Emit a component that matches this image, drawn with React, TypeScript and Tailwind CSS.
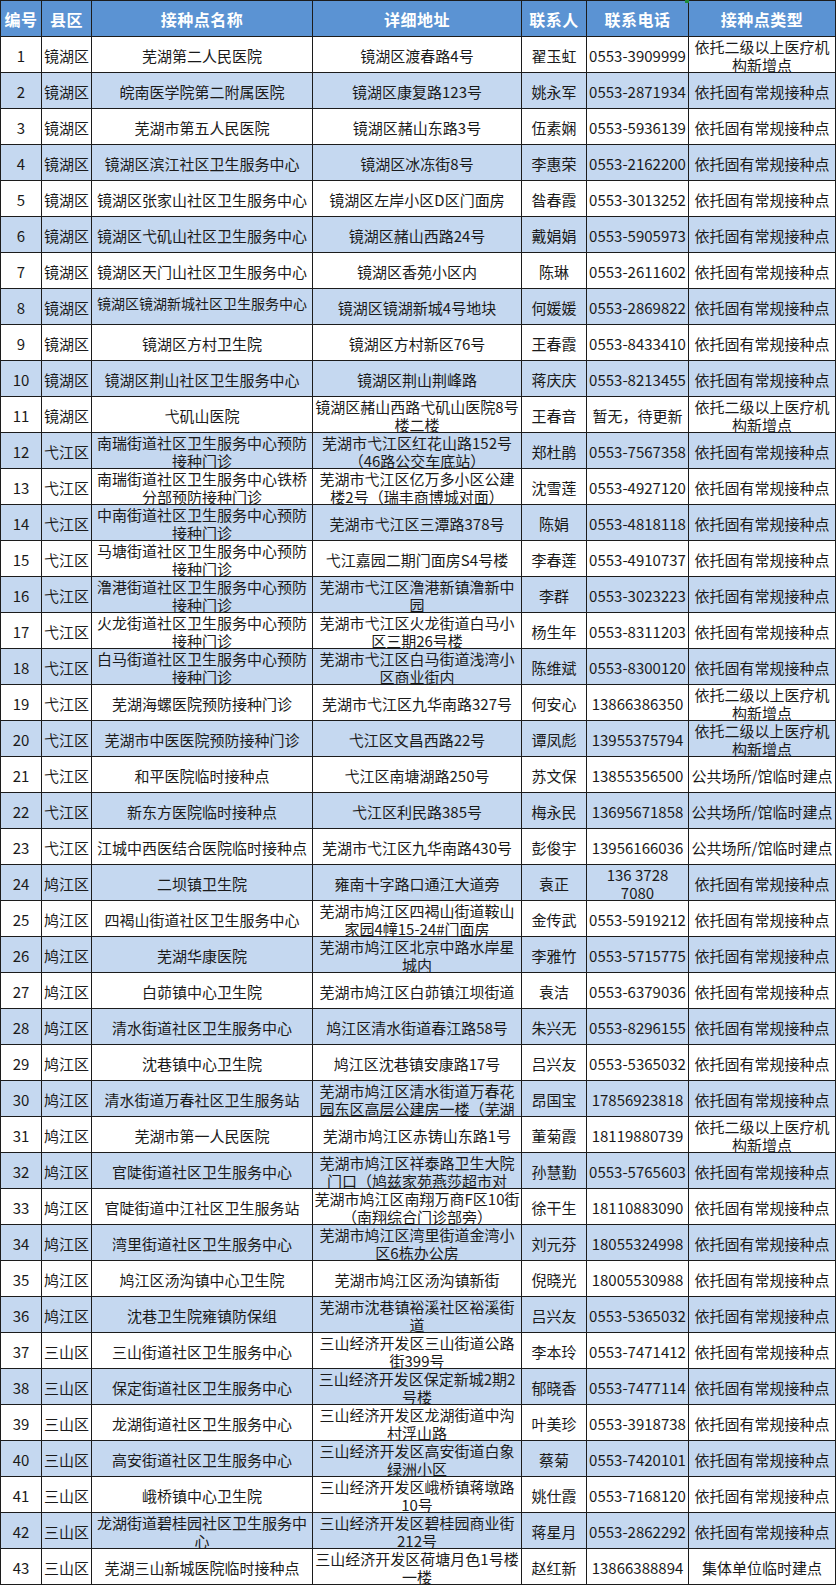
import React from "react";

// 编号, 县区, 接种点名称, 详细地址, 联系人, 联系电话, 接种点类型
// "\n" marks where the original sheet wraps a cell
const rows: string[][] = [
  ["1", "镜湖区", "芜湖第二人民医院", "镜湖区渡春路4号", "翟玉虹", "0553-3909999", "依托二级以上医疗机\n构新增点"],
  ["2", "镜湖区", "皖南医学院第二附属医院", "镜湖区康复路123号", "姚永军", "0553-2871934", "依托固有常规接种点"],
  ["3", "镜湖区", "芜湖市第五人民医院", "镜湖区赭山东路3号", "伍素娴", "0553-5936139", "依托固有常规接种点"],
  ["4", "镜湖区", "镜湖区滨江社区卫生服务中心", "镜湖区冰冻街8号", "李惠荣", "0553-2162200", "依托固有常规接种点"],
  ["5", "镜湖区", "镜湖区张家山社区卫生服务中心", "镜湖区左岸小区D区门面房", "昝春霞", "0553-3013252", "依托固有常规接种点"],
  ["6", "镜湖区", "镜湖区弋矶山社区卫生服务中心", "镜湖区赭山西路24号", "戴娟娟", "0553-5905973", "依托固有常规接种点"],
  ["7", "镜湖区", "镜湖区天门山社区卫生服务中心", "镜湖区香苑小区内", "陈琳", "0553-2611602", "依托固有常规接种点"],
  ["8", "镜湖区", "镜湖区镜湖新城社区卫生服务中心", "镜湖区镜湖新城4号地块", "何媛媛", "0553-2869822", "依托固有常规接种点"],
  ["9", "镜湖区", "镜湖区方村卫生院", "镜湖区方村新区76号", "王春霞", "0553-8433410", "依托固有常规接种点"],
  ["10", "镜湖区", "镜湖区荆山社区卫生服务中心", "镜湖区荆山荆峰路", "蒋庆庆", "0553-8213455", "依托固有常规接种点"],
  ["11", "镜湖区", "弋矶山医院", "镜湖区赭山西路弋矶山医院8号\n楼二楼", "王春音", "暂无，待更新", "依托二级以上医疗机\n构新增点"],
  ["12", "弋江区", "南瑞街道社区卫生服务中心预防\n接种门诊", "芜湖市弋江区红花山路152号\n（46路公交车底站）", "郑杜鹃", "0553-7567358", "依托固有常规接种点"],
  ["13", "弋江区", "南瑞街道社区卫生服务中心铁桥\n分部预防接种门诊", "芜湖市弋江区亿万多小区公建\n楼2号（瑞丰商博城对面）", "沈雪莲", "0553-4927120", "依托固有常规接种点"],
  ["14", "弋江区", "中南街道社区卫生服务中心预防\n接种门诊", "芜湖市弋江区三潭路378号", "陈娟", "0553-4818118", "依托固有常规接种点"],
  ["15", "弋江区", "马塘街道社区卫生服务中心预防\n接种门诊", "弋江嘉园二期门面房S4号楼", "李春莲", "0553-4910737", "依托固有常规接种点"],
  ["16", "弋江区", "澛港街道社区卫生服务中心预防\n接种门诊", "芜湖市弋江区澛港新镇澛新中\n园", "李群", "0553-3023223", "依托固有常规接种点"],
  ["17", "弋江区", "火龙街道社区卫生服务中心预防\n接种门诊", "芜湖市弋江区火龙街道白马小\n区三期26号楼", "杨生年", "0553-8311203", "依托固有常规接种点"],
  ["18", "弋江区", "白马街道社区卫生服务中心预防\n接种门诊", "芜湖市弋江区白马街道浅湾小\n区商业街内", "陈维斌", "0553-8300120", "依托固有常规接种点"],
  ["19", "弋江区", "芜湖海螺医院预防接种门诊", "芜湖市弋江区九华南路327号", "何安心", "13866386350", "依托二级以上医疗机\n构新增点"],
  ["20", "弋江区", "芜湖市中医医院预防接种门诊", "弋江区文昌西路22号", "谭凤彪", "13955375794", "依托二级以上医疗机\n构新增点"],
  ["21", "弋江区", "和平医院临时接种点", "弋江区南塘湖路250号", "苏文保", "13855356500", "公共场所/馆临时建点"],
  ["22", "弋江区", "新东方医院临时接种点", "弋江区利民路385号", "梅永民", "13695671858", "公共场所/馆临时建点"],
  ["23", "弋江区", "江城中西医结合医院临时接种点", "芜湖市弋江区九华南路430号", "彭俊宇", "13956166036", "公共场所/馆临时建点"],
  ["24", "鸠江区", "二坝镇卫生院", "雍南十字路口通江大道旁", "袁正", "136 3728\n7080", "依托固有常规接种点"],
  ["25", "鸠江区", "四褐山街道社区卫生服务中心", "芜湖市鸠江区四褐山街道鞍山\n家园4幢15-24#门面房", "金传武", "0553-5919212", "依托固有常规接种点"],
  ["26", "鸠江区", "芜湖华康医院", "芜湖市鸠江区北京中路水岸星\n城内", "李雅竹", "0553-5715775", "依托固有常规接种点"],
  ["27", "鸠江区", "白茆镇中心卫生院", "芜湖市鸠江区白茆镇江坝街道", "袁洁", "0553-6379036", "依托固有常规接种点"],
  ["28", "鸠江区", "清水街道社区卫生服务中心", "鸠江区清水街道春江路58号", "朱兴无", "0553-8296155", "依托固有常规接种点"],
  ["29", "鸠江区", "沈巷镇中心卫生院", "鸠江区沈巷镇安康路17号", "吕兴友", "0553-5365032", "依托固有常规接种点"],
  ["30", "鸠江区", "清水街道万春社区卫生服务站", "芜湖市鸠江区清水街道万春花\n园东区高层公建房一楼（芜湖", "昂国宝", "17856923818", "依托固有常规接种点"],
  ["31", "鸠江区", "芜湖市第一人民医院", "芜湖市鸠江区赤铸山东路1号", "董菊霞", "18119880739", "依托二级以上医疗机\n构新增点"],
  ["32", "鸠江区", "官陡街道社区卫生服务中心", "芜湖市鸠江区祥泰路卫生大院\n门口（鸠兹家苑燕莎超市对", "孙慧勤", "0553-5765603", "依托固有常规接种点"],
  ["33", "鸠江区", "官陡街道中江社区卫生服务站", "芜湖市鸠江区南翔万商F区10街\n（南翔综合门诊部旁）", "徐干生", "18110883090", "依托固有常规接种点"],
  ["34", "鸠江区", "湾里街道社区卫生服务中心", "芜湖市鸠江区湾里街道金湾小\n区6栋办公房", "刘元芬", "18055324998", "依托固有常规接种点"],
  ["35", "鸠江区", "鸠江区汤沟镇中心卫生院", "芜湖市鸠江区汤沟镇新街", "倪晓光", "18005530988", "依托固有常规接种点"],
  ["36", "鸠江区", "沈巷卫生院雍镇防保组", "芜湖市沈巷镇裕溪社区裕溪街\n道", "吕兴友", "0553-5365032", "依托固有常规接种点"],
  ["37", "三山区", "三山街道社区卫生服务中心", "三山经济开发区三山街道公路\n街399号", "李本玲", "0553-7471412", "依托固有常规接种点"],
  ["38", "三山区", "保定街道社区卫生服务中心", "三山经济开发区保定新城2期2\n号楼", "郁晓香", "0553-7477114", "依托固有常规接种点"],
  ["39", "三山区", "龙湖街道社区卫生服务中心", "三山经济开发区龙湖街道中沟\n村浮山路", "叶美珍", "0553-3918738", "依托固有常规接种点"],
  ["40", "三山区", "高安街道社区卫生服务中心", "三山经济开发区高安街道白象\n绿洲小区", "蔡菊", "0553-7420101", "依托固有常规接种点"],
  ["41", "三山区", "峨桥镇中心卫生院", "三山经济开发区峨桥镇蒋墩路\n10号", "姚仕霞", "0553-7168120", "依托固有常规接种点"],
  ["42", "三山区", "龙湖街道碧桂园社区卫生服务中\n心", "三山经济开发区碧桂园商业街\n212号", "蒋星月", "0553-2862292", "依托固有常规接种点"],
  ["43", "三山区", "芜湖三山新城医院临时接种点", "三山经济开发区荷塘月色1号楼\n一楼", "赵红新", "13866388894", "集体单位临时建点"],
];

const headers = ["编号", "县区", "接种点名称", "详细地址", "联系人", "联系电话", "接种点类型"];

const cellBase =
  "h-9 border-r border-b border-[#1c1c1c] flex items-center justify-center overflow-hidden text-center";

function CellText({ text, tight }: { text: string; tight?: boolean }) {
  const lines = text.split("\n");
  return (
    <div className={tight ? "leading-[18px] text-[14px] mb-[8px]" : "leading-[18px] pt-[2px]"}>
      {lines.map((line, i) => (
        <div key={i} className="whitespace-nowrap">
          {line}
        </div>
      ))}
    </div>
  );
}

export default function App() {
  return (
    <div className="relative w-[838px] min-h-[1586px] bg-white font-['Noto_Sans_CJK_SC','Liberation_Sans',sans-serif] text-[15px] text-[#1a1a1a]">
      <div className="w-[836px] grid grid-cols-[41px_50px_221px_209px_65px_102px_147px] border-l border-t border-[#1c1c1c]">
        {headers.map((h) => (
          <div
            key={h}
            className={`${cellBase} bg-[#5b93d3] text-white font-bold text-[16px] tracking-[0.5px]`}
          >
            {h}
          </div>
        ))}
        {rows.map((row, r) =>
          row.map((val, c) => (
            <div
              key={`${r}-${c}`}
              className={`${cellBase} ${r % 2 === 1 ? "bg-[#c5d8f0]" : "bg-white"}`}
            >
              {/* row 8's long name is squeezed into the cell in the sheet */}
              <CellText text={val} tight={val.length > 14 && !val.includes("\n") && c === 2} />
            </div>
          ))
        )}
      </div>
      {/* sheet selection corner mark */}
      <div className="absolute left-[685px] top-0 w-[4px] h-[3px] bg-[#1f8a3a]" />
    </div>
  );
}
